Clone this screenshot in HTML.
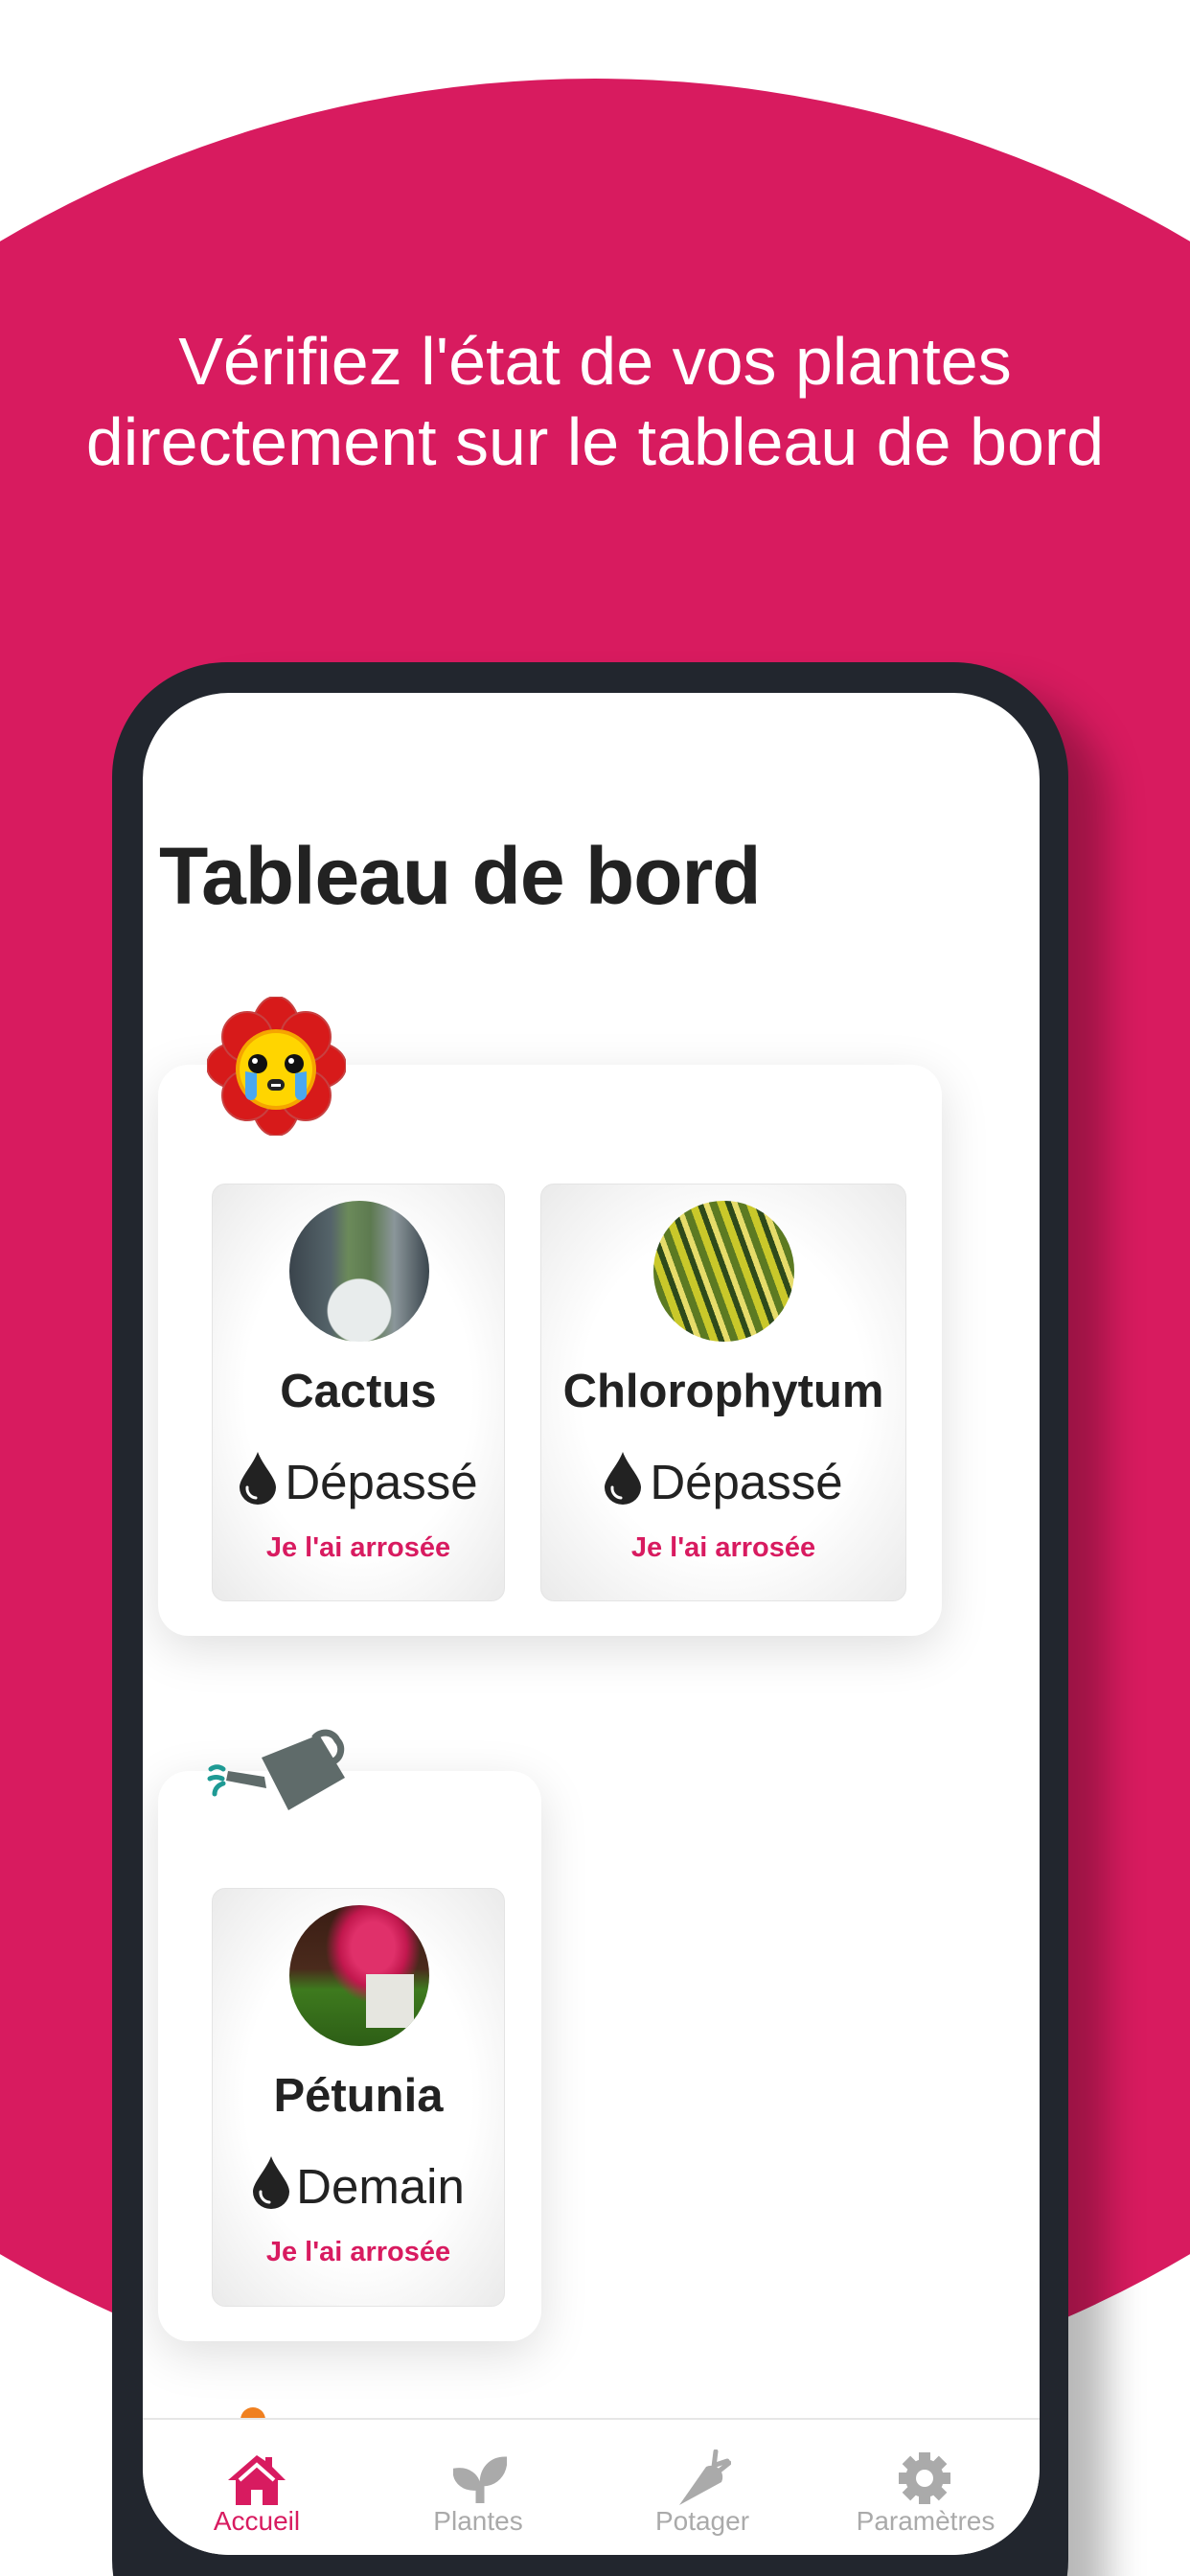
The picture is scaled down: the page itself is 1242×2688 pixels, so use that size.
<!DOCTYPE html>
<html><head><meta charset="utf-8">
<style>
*{margin:0;padding:0;box-sizing:border-box}
html,body{width:1242px;height:2688px;overflow:hidden;background:#fff}
body{font-family:"Liberation Sans",sans-serif}
#wrap{position:relative;width:1242px;height:2688px;overflow:hidden}
.ab{position:absolute}
.blob{left:-599px;top:82px;width:2440px;height:2440px;border-radius:50%;background:#d81b5f}
.hd{left:0;width:1242px;text-align:center;color:#fff;font-size:70px;line-height:84px;top:335px}
.frame{left:117px;top:691px;width:998px;height:2100px;background:#22262e;border-radius:120px;box-shadow:40px 30px 40px rgba(0,0,0,0.28)}
.screen{left:149px;top:723px;width:936px;height:1943px;background:#fff;border-radius:90px;overflow:hidden}
.title{left:17px;top:143px;font-size:84px;font-weight:bold;color:#222;letter-spacing:-1px}
.card{background:#fff;border-radius:32px;box-shadow:0 14px 50px rgba(0,0,0,0.13)}
.inner{border-radius:14px;background:radial-gradient(ellipse at center,#fff 55%,#eaeaea 100%);border:1px solid #e4e4e4}
.img{border-radius:50%;overflow:hidden}
.nm{width:100%;text-align:center;font-size:49px;font-weight:bold;color:#222}
.st{width:100%;text-align:center;font-size:51px;color:#222;white-space:nowrap}
.btn{width:100%;text-align:center;font-size:29px;font-weight:bold;color:#d81b60}
.nav{left:0;top:1800px;width:936px;height:143px;border-top:2px solid #e6e6e6;background:#fff}
.lbl{font-size:28px;color:#aaa;text-align:center;width:200px}
</style></head><body><div id="wrap">
<div class="ab blob"></div>
<div class="ab hd">Vérifiez l'état de vos plantes<br>directement sur le tableau de bord</div>
<div class="ab frame"></div>
<div class="ab screen">
  <div class="ab title">Tableau de bord</div>

  <div class="ab card" style="left:16px;top:388px;width:818px;height:596px">
    <div class="ab inner" style="left:56px;top:124px;width:306px;height:436px">
      <div class="ab img" style="left:80px;top:17px;width:146px;height:147px;background:radial-gradient(circle at 50% 78%,#e8ecec 0 24%,transparent 25%),linear-gradient(90deg,#3a444c 0,#55646a 30%,#6b8a5a 42%,#5d7a50 58%,#8b969a 75%,#3b464e 100%)"></div>
      <div class="ab nm" style="top:188px">Cactus</div>
      <div class="ab st" style="top:279px"><svg width="40" height="55" viewBox="0 0 40 55" style="vertical-align:-6px;margin-right:8px"><path d="M20 0C15 14 1 27 1 37a19 18 0 0 0 38 0C39 27 25 14 20 0Z" fill="#222"/><path d="M9 37a10 10 0 0 0 9 11" stroke="#fff" stroke-width="3" fill="none" stroke-linecap="round"/></svg>Dépassé</div>
      <div class="ab btn" style="top:363px">Je l'ai arrosée</div>
    </div>
    <div class="ab inner" style="left:399px;top:124px;width:382px;height:436px">
      <div class="ab img" style="left:117px;top:17px;width:147px;height:147px;background:repeating-linear-gradient(70deg,#c9c82a 0 8px,#2e4a1a 8px 14px,#e6dc6a 14px 20px,#5c7a22 20px 28px),#8a9a30"></div>
      <div class="ab nm" style="top:188px">Chlorophytum</div>
      <div class="ab st" style="top:279px"><svg width="40" height="55" viewBox="0 0 40 55" style="vertical-align:-6px;margin-right:8px"><path d="M20 0C15 14 1 27 1 37a19 18 0 0 0 38 0C39 27 25 14 20 0Z" fill="#222"/><path d="M9 37a10 10 0 0 0 9 11" stroke="#fff" stroke-width="3" fill="none" stroke-linecap="round"/></svg>Dépassé</div>
      <div class="ab btn" style="top:363px">Je l'ai arrosée</div>
    </div>
  </div>
  <svg class="ab" style="left:67px;top:317px" width="145" height="145" viewBox="0 0 145 145">
    <g fill="#d71a1a" stroke="#c84040" stroke-width="2">
      <ellipse cx="72" cy="32" rx="24" ry="32"/><ellipse cx="72" cy="113" rx="24" ry="32"/>
      <ellipse cx="32" cy="72" rx="32" ry="24"/><ellipse cx="113" cy="72" rx="32" ry="24"/>
      <ellipse cx="42" cy="42" rx="26" ry="26"/><ellipse cx="103" cy="42" rx="26" ry="26"/>
      <ellipse cx="42" cy="103" rx="26" ry="26"/><ellipse cx="103" cy="103" rx="26" ry="26"/>
    </g>
    <circle cx="72" cy="76" r="42" fill="#f5a500"/><circle cx="72" cy="76" r="38" fill="#ffd500"/>
    <circle cx="53" cy="70" r="10" fill="#111"/><circle cx="91" cy="70" r="10" fill="#111"/>
    <circle cx="50" cy="67" r="3" fill="#fff"/><circle cx="88" cy="67" r="3" fill="#fff"/>
    <path d="M40 78v24a6 6 0 0 0 12 0V80Z M104 78v24a6 6 0 0 1-12 0V80Z" fill="#4aa8f0"/>
    <rect x="63" y="86" width="18" height="12" rx="6" fill="#222"/><rect x="67" y="91" width="10" height="3" fill="#fff"/>
  </svg>

  <div class="ab card" style="left:16px;top:1125px;width:400px;height:595px">
    <div class="ab inner" style="left:56px;top:122px;width:306px;height:437px">
      <div class="ab img" style="left:80px;top:17px;width:146px;height:147px;background:radial-gradient(ellipse at 60% 30%,#e0306a 0 18%,#c2184e 28%,transparent 40%),linear-gradient(180deg,#3a1d14 0,#4a2a1c 45%,#3e7a1e 60%,#2d5e16 100%)">
        <div class="ab" style="left:80px;top:72px;width:50px;height:56px;background:#e6e6e0"></div>
      </div>
      <div class="ab nm" style="top:188px">Pétunia</div>
      <div class="ab st" style="top:279px"><svg width="40" height="55" viewBox="0 0 40 55" style="vertical-align:-6px;margin-right:6px"><path d="M20 0C15 14 1 27 1 37a19 18 0 0 0 38 0C39 27 25 14 20 0Z" fill="#222"/><path d="M9 37a10 10 0 0 0 9 11" stroke="#fff" stroke-width="3" fill="none" stroke-linecap="round"/></svg>Demain</div>
      <div class="ab btn" style="top:363px">Je l'ai arrosée</div>
    </div>
  </div>
  <svg class="ab" style="left:67px;top:1079px" width="146" height="90" viewBox="0 0 146 90">
    <path d="M57 32L117 8L144 53L85 87Z" fill="#5f6b6a"/>
    <path d="M112 12a14 14 0 0 1 24 2a14 14 0 0 1-4 22" stroke="#5f6b6a" stroke-width="7" fill="none"/>
    <path d="M60 52L22 46L20 56L62 64Z" fill="#5f6b6a"/>
    <path d="M4 44c4-3 9-3 13 0M3 54c4-2 9-2 13 0M8 70c0-5 3-9 9-11" stroke="#1e9a94" stroke-width="5" fill="none" stroke-linecap="round"/>
  </svg>
  <div class="ab" style="left:102px;top:1789px;width:26px;height:13px;border-radius:13px 13px 0 0;background:#f08020"></div>

  <div class="ab nav">
    <svg class="ab" style="left:87px;top:35px" width="64" height="56" viewBox="0 0 64 56"><path d="M32 2L2 28h8v26h16V38h12v16h16V28h8L48 14V4h-7v4z" fill="#d81b60"/><path d="M14 28L32 12l18 16" stroke="#fff" stroke-width="4" fill="none"/></svg>
    <div class="ab lbl" style="left:19px;top:90px;color:#d81b60">Accueil</div>
    <svg class="ab" style="left:324px;top:37px" width="56" height="52" viewBox="0 0 56 52"><path d="M26 50V34C26 22 16 14 2 16c0 12 10 20 24 18M30 50V30C30 14 40 4 54 4c0 16-10 26-24 26" fill="#aaa" stroke="#aaa" stroke-width="5"/></svg>
    <div class="ab lbl" style="left:250px;top:90px">Plantes</div>
    <svg class="ab" style="left:558px;top:31px" width="56" height="60" viewBox="0 0 56 60"><path d="M2 58L30 18a12 12 0 0 1 16 16Z" fill="#aaa"/><path d="M38 18L40 2M44 22l10-8M40 16l12-4" stroke="#aaa" stroke-width="5" stroke-linecap="round"/></svg>
    <div class="ab lbl" style="left:484px;top:90px">Potager</div>
    <svg class="ab" style="left:788px;top:33px" width="56" height="56" viewBox="-28 -28 56 56"><g fill="#aaa"><circle r="20"/><rect x="-6" y="-27" width="12" height="54"/><rect x="-6" y="-27" width="12" height="54" transform="rotate(45)"/><rect x="-6" y="-27" width="12" height="54" transform="rotate(90)"/><rect x="-6" y="-27" width="12" height="54" transform="rotate(135)"/></g><circle r="9" fill="#fff"/></svg>
    <div class="ab lbl" style="left:717px;top:90px">Paramètres</div>
  </div>
</div>
</div></body></html>
